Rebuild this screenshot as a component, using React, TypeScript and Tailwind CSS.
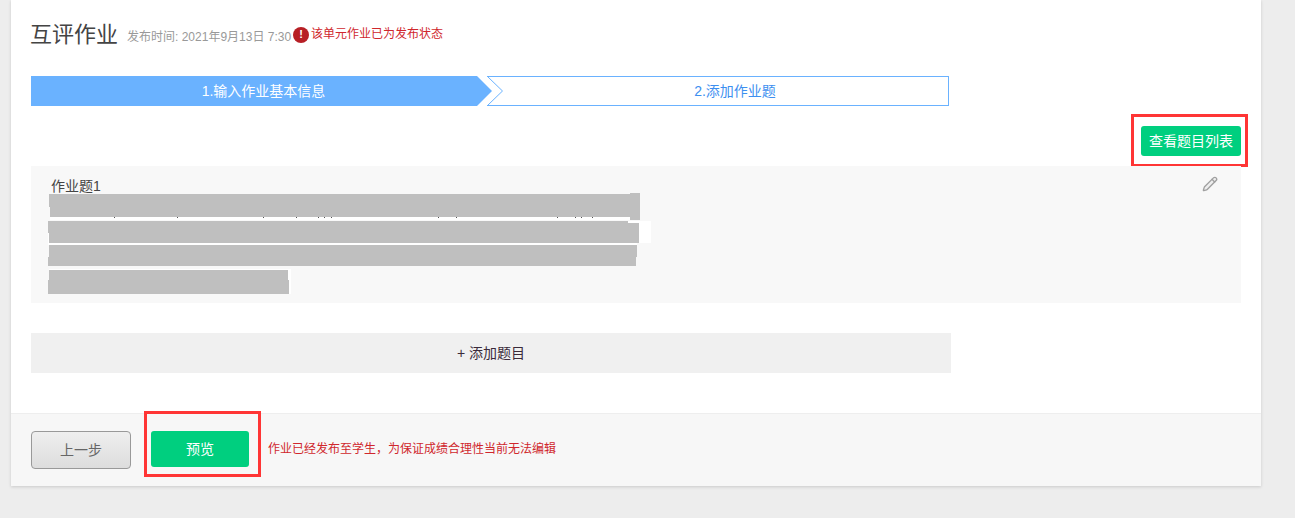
import { Pencil } from "lucide-react";

const redactions = [
  "left-[19px] top-[51px] w-[580px] h-[3px] bg-white",
  "left-[17px] top-[55px] w-[603px] h-[22px] bg-white",
  "left-[17px] top-[77px] w-[589px] h-[2px] bg-white",
  "left-[18px] top-[103px] w-[242px] h-[25px] bg-white",
  "left-[18px] top-[28px] w-[581px] h-[13px] bg-[#bfbfbf]",
  "left-[19px] top-[41px] w-[580px] h-[10px] bg-[#bfbfbf]",
  "left-[599px] top-[27px] w-[10px] h-[27px] bg-[#bfbfbf]",
  "left-[17px] top-[55px] w-[580px] h-[12px] bg-[#bfbfbf]",
  "left-[18px] top-[57px] w-[590px] h-[20px] bg-[#bfbfbf]",
  "left-[18px] top-[79px] w-[588px] h-[12px] bg-[#bfbfbf]",
  "left-[17px] top-[91px] w-[588px] h-[9px] bg-[#bfbfbf]",
  "left-[18px] top-[104px] w-[239px] h-[10px] bg-[#bfbfbf]",
  "left-[17px] top-[114px] w-[241px] h-[14px] bg-[#bfbfbf]",
];

const specks = [
  "left-[83px]", "left-[146px]", "left-[232px]", "left-[265px]", "left-[287px]", "left-[293px]", "left-[300px]",
  "left-[407px]", "left-[425px]", "left-[526px]", "left-[544px]", "left-[550px]", "left-[561px]",
];

export default function App() {
  return (
    <div className="h-[518px] overflow-hidden bg-[#ededed] pl-[11px] font-['Liberation_Sans','Noto_Sans_CJK_SC',sans-serif]">
      <div className="flex h-[486px] w-[1250px] flex-col bg-white shadow-[0_1px_3px_rgba(0,0,0,0.15)]">
        <div className="flex-1 px-5 pt-5">
          <div className="flex h-[28px] items-center">
            <h1 className="-ml-px mt-[2px] text-[22px] leading-[28px] font-normal text-[#444]">互评作业</h1>
            <span className="ml-[9px] mt-[6px] text-xs leading-[16px] text-[#999]">发布时间: 2021年9月13日 7:30</span>
            <span className="ml-[2px] mt-px flex h-4 w-4 items-center justify-center rounded-full bg-[#b71f25] text-[11px] leading-none font-bold text-white">!</span>
            <span className="ml-0.5 text-xs leading-[16px] text-[#d0272d]">该单元作业已为发布状态</span>
          </div>

          <div className="mt-[28px] flex h-[30px] w-[918px]">
            <div className="flex h-full w-[461px] items-center justify-center bg-[#6ab2ff] pl-[4px] text-sm text-white [clip-path:polygon(0_0,446px_0,461px_50%,446px_100%,0_100%)]">
              1.输入作业基本信息
            </div>
            <div className="relative -ml-[5px] flex h-full w-[462px] items-center justify-center border-y border-r border-[#6ab2ff] pl-[35px] text-sm text-[#3d8ff0]">
              <svg className="absolute -top-px left-0 h-[30px] w-[18px]" viewBox="0 0 18 30" fill="none">
                <path d="M0.5 0.5 L15.5 15 L0.5 29.5" stroke="#6ab2ff" strokeWidth="1" />
              </svg>
              2.添加作业题
            </div>
          </div>

          <div className="mt-5 flex justify-end">
            <div className="relative">
              <button className="flex h-[30px] w-[100px] items-center justify-center rounded-[3px] bg-[#00cf7f] text-sm text-white">
                查看题目列表
              </button>
              <div className="absolute -top-[12px] -right-[7px] -bottom-[11px] -left-[10px] border-[3px] border-[#ff3535]" />
            </div>
          </div>

          <div className="relative mt-[10px] h-[137px] bg-[#f8f8f8] pt-[12px] pl-5">
            <div className="text-sm leading-[16px] text-[#444]">作业题1</div>
            <Pencil className="absolute top-[10px] right-[23px] h-4 w-4 fill-[#eeeeee] text-[#a0a0a0]" strokeWidth={2} />
            {redactions.map((c) => (
              <div key={c} className={"absolute " + c} />
            ))}
            {specks.map((c) => (
              <div key={c} className={"absolute top-[51px] h-px w-px bg-[#555] " + c} />
            ))}
          </div>

          <button className="mt-[30px] flex h-[40px] w-[920px] items-center justify-center bg-[#f0f0f0] text-sm text-[#3a2a3a]">
            + 添加题目
          </button>
        </div>

        <div className="flex h-[73px] items-start border-t border-[#eeeeee] bg-[#f7f7f7] px-5 pt-[17px]">
          <button className="flex h-[38px] w-[100px] items-center justify-center rounded-[4px] border border-[#999] bg-gradient-to-b from-[#efefef] to-[#dddddd] text-sm text-[#666]">
            上一步
          </button>
          <div className="relative ml-5">
            <button className="flex h-[36px] w-[98px] items-center justify-center rounded-[3px] bg-[#00cf7f] text-sm text-white">
              预览
            </button>
            <div className="absolute -top-[20px] -right-[12px] -bottom-[10px] -left-[7px] border-[3px] border-[#ff3535]" />
          </div>
          <span className="mt-[9px] ml-[19px] text-xs leading-[18px] text-[#d0272d]">
            作业已经发布至学生，为保证成绩合理性当前无法编辑
          </span>
        </div>
      </div>
    </div>
  );
}
